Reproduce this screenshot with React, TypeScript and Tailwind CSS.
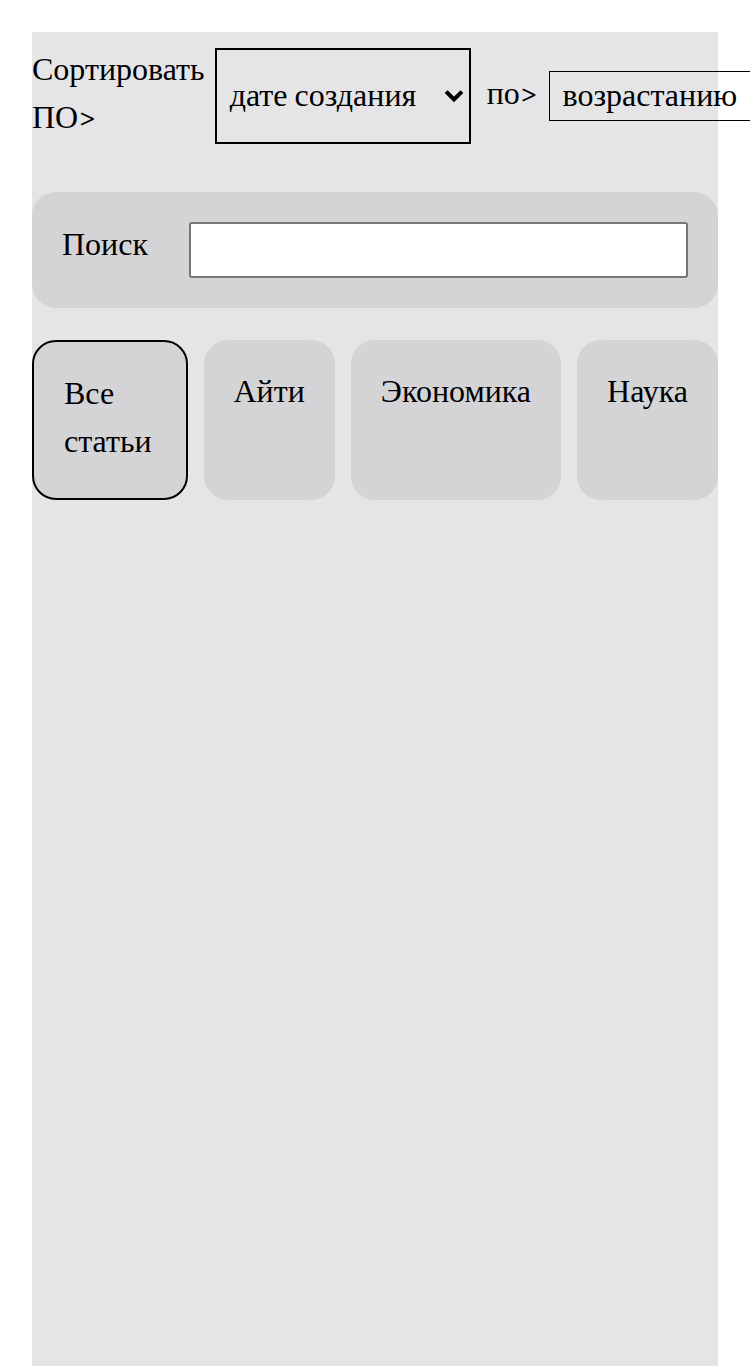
const categories = ["Все статьи", "Айти", "Экономика", "Наука"];

function Chevron() {
  return (
    <svg width="20" height="14" viewBox="0 0 20 14" className="shrink-0">
      <path d="M3.5 4 L10 10.5 L16.5 4" fill="none" stroke="#000" strokeWidth="4" strokeLinecap="square" strokeLinejoin="miter" />
    </svg>
  );
}

export default function App() {
  const active = "Все статьи";
  return (
    <div className="px-8 pt-8 bg-white text-black text-[32px] leading-[48px] font-serif">
      <div className="h-screen bg-[#e5e5e8]">
        <div className="flex items-center pt-4">
          <div className="-mt-1">Сортировать ПО&gt;</div>
          <div className="ml-[10px] flex h-24 w-64 shrink-0 items-center justify-between border-2 border-black pl-[13px] pr-[5px]">
            <span>дате создания</span>
            <Chevron />
          </div>
          <div className="ml-4 -mt-1 shrink-0">по&gt;</div>
          <div className="ml-[11px] h-[50px] w-[240px] shrink-0 border border-black pl-[13px]">
            возрастанию
          </div>
        </div>

        <div className="mt-12 flex items-start rounded-3xl bg-[#d4d4d7] p-[30px]">
          <label className="-mt-px shrink-0">Поиск</label>
          <input
            type="text"
            className="ml-[41px] h-14 min-w-0 flex-1 rounded-[3px] border-2 border-[#767676] bg-white px-2 outline-none"
          />
        </div>

        <div className="mt-8 flex gap-4">
          {categories.map((c) => (
            <div
              key={c}
              className={
                c === active
                  ? "rounded-3xl border-2 border-black bg-[#d4d4d7] px-[30px] pt-[28px] pb-[32px]"
                  : "rounded-3xl bg-[#d4d4d7] px-[30px] pt-[28px] pb-[32px] text-center"
              }
            >
              {c}
            </div>
          ))}
        </div>
      </div>
    </div>
  );
}
